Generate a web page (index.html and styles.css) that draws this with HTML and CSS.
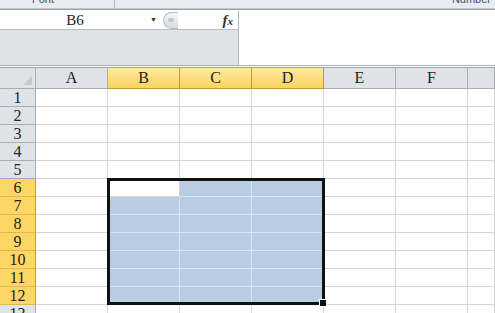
FILE: index.html
```html
<!DOCTYPE html>
<html lang="en">
<head>
  <meta charset="UTF-8" />
  <title>Sheet1</title>
  <link rel="stylesheet" href="styles.css">
</head>
<body>

<div class="ribbon">
  <div class="group group-font"><span>Font</span></div>
  <div class="group group-rest"><span>Number</span></div>
</div>

<div class="formula-bar">
  <div class="fb-left">
    <div class="namebox-row">
      <div class="namebox">B6</div>
      <span class="drop">&#9660;</span>
      <span class="knob"><i></i></span>
      <span class="fx">f<sub>x</sub></span>
    </div>
    <div class="fb-fill"></div>
  </div>
  <div class="fb-input"></div>
</div>

<div class="sheet">
  <div class="grid" id="grid"></div>
  <div class="selection"><span class="handle"></span></div>
</div>

<script>
  // Construction de la grille
  const cols = ['A', 'B', 'C', 'D', 'E', 'F', ''];
  const selCols = [1, 2, 3];
  const grid = document.getElementById('grid');
  let html = '<div class="corner"><span class="tri"></span></div>';
  cols.forEach((c, i) => {
    html += `<div class="col-head${selCols.includes(i) ? ' on' : ''}">${c}</div>`;
  });
  for (let r = 1; r <= 13; r++) {
    const rowOn = r >= 6 && r <= 12;
    html += `<div class="row-head${rowOn ? ' on' : ''}">${r}</div>`;
    cols.forEach((c, i) => {
      let cls = 'cell';
      if (rowOn && selCols.includes(i) && !(r === 6 && i === 1)) cls += ' sel';
      html += `<div class="${cls}"></div>`;
    });
  }
  grid.innerHTML = html;
</script>

</body>
</html>
```

FILE: styles.css
```css
body {
  margin: 0;
  width: 495px;
  height: 313px;
  overflow: hidden;
  background: #fff;
  font-family: "Liberation Serif", "DejaVu Serif", serif;
  color: #222;
}
.ribbon {
  height: 8px;
  display: flex;
  background: #e8ebef;
  border-bottom: 1px solid #c3c8d0;
  box-shadow: 0 1px 0 #9aa1ab;
  overflow: hidden;
}
.group {
  position: relative;
  height: 8px;
  font-family: "Liberation Sans", sans-serif;
  font-size: 11px;
  color: #4a4f58;
}
.group span {
  display: block;
  margin-top: -7px;
}
.group-font {
  width: 115px;
  border-right: 1px solid #b8bec7;
  padding-left: 32px;
  box-sizing: border-box;
}
.group-rest {
  flex: 1;
  text-align: right;
  padding-right: 4px;
}
.formula-bar {
  display: flex;
  height: 54px;
  margin-top: 2px;
  border-bottom: 1px solid #a9b0b9;
}
.fb-left {
  width: 238px;
  display: flex;
  flex-direction: column;
  border-right: 1px solid #b2b8c1;
  background: #dfe2e6;
}
.namebox-row {
  height: 18px;
  display: flex;
  align-items: center;
  background: #fff;
  border-bottom: 1px solid #b9bec6;
}
.namebox {
  width: 150px;
  text-align: center;
  font-size: 15px;
}
.drop {
  font-size: 7px;
  color: #333;
  width: 11px;
}
.knob {
  position: relative;
  width: 15px;
  height: 17px;
  margin-left: 2px;
  border-radius: 9px 0 0 9px;
  background: linear-gradient(#f5f6f8, #d5d9de);
  border: 1px solid #b6bcc4;
  border-right: none;
  box-sizing: border-box;
}
.knob i {
  position: absolute;
  left: 4px;
  top: 5px;
  width: 6px;
  height: 4px;
  border-radius: 3px;
  background: #c2c6cc;
}
.fx {
  margin-left: auto;
  margin-right: 5px;
  font-family: "Liberation Serif", serif;
  font-style: italic;
  font-weight: bold;
  font-size: 15px;
  color: #333;
}
.fx sub {
  font-size: 11px;
  vertical-align: 0;
}
.fb-fill {
  flex: 1;
}
.fb-input {
  flex: 1;
  background: #fff;
}
.sheet {
  position: relative;
  border-top: 1px solid #fff;
}
.grid {
  display: grid;
  grid-template-columns: 36px repeat(6, 72px) 27px;
  grid-template-rows: 21px repeat(13, 18px);
  border-top: 1px solid #9ea4ad;
}
.corner {
  position: relative;
  background: #dfe2e6;
  border-right: 1px solid #a9aeb6;
  border-bottom: 1px solid #a9aeb6;
}
.tri {
  position: absolute;
  right: 3px;
  bottom: 3px;
  width: 0;
  height: 0;
  border-left: 9px solid transparent;
  border-bottom: 9px solid #c5c9ce;
}
.col-head, .row-head {
  display: flex;
  align-items: center;
  justify-content: center;
  background: #dfe2e6;
  border-right: 1px solid #a9aeb6;
  border-bottom: 1px solid #a9aeb6;
  font-size: 16px;
  box-sizing: border-box;
}
.col-head.on {
  background: linear-gradient(#fde9a2, #fad45e);
  border-right-color: #c29a3c;
  border-bottom-color: #c29a3c;
}
.row-head.on {
  background: #fcd766;
  border-right-color: #c29a3c;
  border-bottom-color: #e4b74c;
}
.cell {
  border-right: 1px solid #d4d4d4;
  border-bottom: 1px solid #d4d4d4;
  box-sizing: border-box;
}
.cell.sel {
  background: #b8cce4;
  border-right-color: #dbe5f1;
  border-bottom-color: #dbe5f1;
}
.selection {
  position: absolute;
  left: 107px;
  top: 111px;
  width: 218px;
  height: 127px;
  border: 3px solid #111;
  box-sizing: border-box;
}
.handle {
  position: absolute;
  right: -5px;
  bottom: -5px;
  width: 6px;
  height: 6px;
  background: #111;
  border: 1px solid #fff;
}
```
